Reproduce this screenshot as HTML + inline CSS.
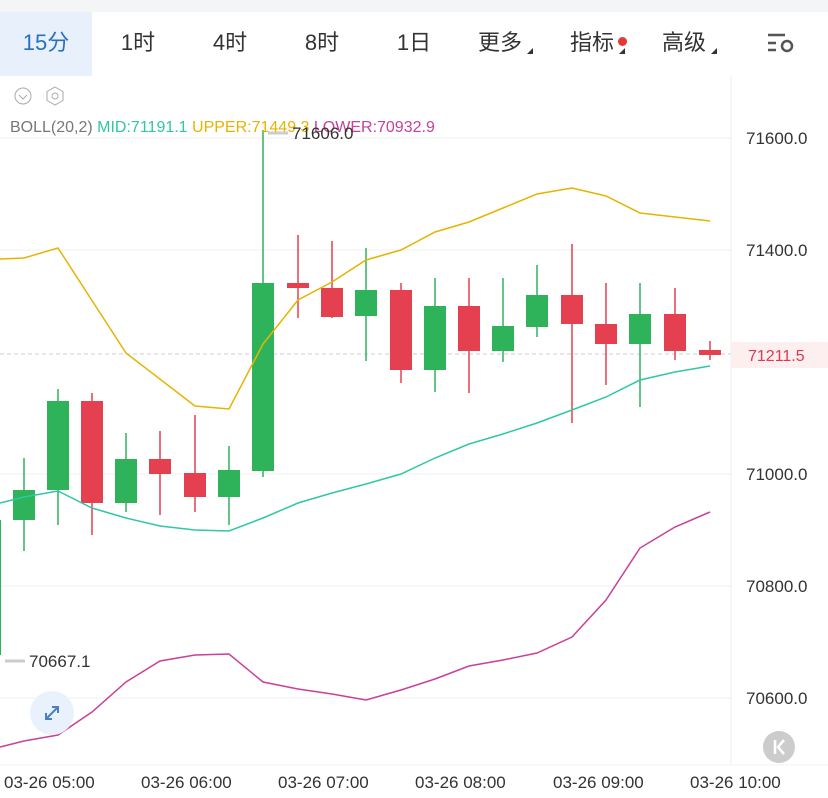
<!DOCTYPE html><html><head><meta charset="utf-8"><style>
body{margin:0;width:828px;height:798px;overflow:hidden;background:#fff;font-family:"Liberation Sans","Noto Sans CJK SC",sans-serif;}
.top{position:absolute;left:0;top:0;width:828px;height:12px;background:#f3f5f7}
.tabs{position:absolute;top:12px;left:0;width:828px;height:64px}
.tab{position:absolute;top:0;height:64px;line-height:62px;font-size:22px;color:#333;text-align:center}
.sel{background:#e7f0fb;color:#2a6fc0}
.tri{position:absolute;width:0;height:0;border-left:6px solid transparent;border-bottom:6px solid #333;}
</style></head><body>
<div class="top"></div>
<div class="tabs">
<div class="tab sel" style="left:0;width:92px">15分</div>
<div class="tab" style="left:92px;width:92px">1时</div>
<div class="tab" style="left:184px;width:92px">4时</div>
<div class="tab" style="left:276px;width:92px">8时</div>
<div class="tab" style="left:368px;width:92px">1日</div>
<div class="tab" style="left:460px;width:80px">更多</div><div class="tri" style="left:527px;top:36px"></div>
<div class="tab" style="left:552px;width:80px">指标</div><div class="tri" style="left:619px;top:36px"></div>
<div style="position:absolute;left:618px;top:25px;width:9px;height:9px;border-radius:50%;background:#e53935"></div>
<div class="tab" style="left:644px;width:80px">高级</div><div class="tri" style="left:711px;top:36px"></div>
</div>
<svg width="828" height="798" style="position:absolute;left:0;top:0" font-family="Liberation Sans, sans-serif">
<g stroke="#555" stroke-width="2.5" fill="none"><line x1="768" y1="35" x2="785" y2="35"/><line x1="768" y1="43" x2="776" y2="43"/><line x1="768" y1="50" x2="776" y2="50"/><circle cx="787" cy="46" r="5"/></g>
<g stroke="#aaa" fill="none" stroke-width="1"><circle cx="23" cy="96" r="8"/><path d="M19 95l4 4 4-4"/><path d="M55 87l8 4.5v9l-8 4.5-8-4.5v-9z"/><circle cx="55" cy="96" r="3"/></g>
<line x1="731" y1="76" x2="731" y2="765" stroke="#eee"/>
<g stroke="#f0f0f0"><line x1="0" y1="138" x2="731" y2="138"/><line x1="0" y1="250" x2="731" y2="250"/><line x1="0" y1="474" x2="731" y2="474"/><line x1="0" y1="586" x2="731" y2="586"/><line x1="0" y1="698" x2="731" y2="698"/></g>
<line x1="0" y1="354" x2="731" y2="354" stroke="#ccc" stroke-dasharray="4,3"/>
<rect x="731" y="342" width="97" height="26" fill="#fdeef0"/>
<text x="748" y="361" font-size="16" fill="#e0394f">71211.5</text>
<g font-size="17" fill="#333"><text x="746" y="144">71600.0</text><text x="746" y="256">71400.0</text><text x="746" y="480">71000.0</text><text x="746" y="592">70800.0</text><text x="746" y="704">70600.0</text></g>
<g font-size="17" fill="#333"><text x="4" y="788">03-26 05:00</text><text x="141" y="788">03-26 06:00</text><text x="278" y="788">03-26 07:00</text><text x="415" y="788">03-26 08:00</text><text x="553" y="788">03-26 09:00</text><text x="690" y="788">03-26 10:00</text></g>
<line x1="0" y1="765" x2="828" y2="765" stroke="#f3f3f3"/>
<g stroke-width="1.5">
<g stroke="#2fb35a" fill="#2fb35a">
<line x1="24" y1="458" x2="24" y2="551"/><rect x="13" y="490" width="22" height="30" stroke="none"/>
<line x1="58" y1="389" x2="58" y2="525"/><rect x="47" y="401" width="22" height="89" stroke="none"/>
<line x1="126" y1="433" x2="126" y2="512"/><rect x="115" y="459" width="22" height="44" stroke="none"/>
<line x1="229" y1="446" x2="229" y2="525"/><rect x="218" y="470" width="22" height="27" stroke="none"/>
<line x1="263" y1="130" x2="263" y2="477"/><rect x="252" y="283" width="22" height="188" stroke="none"/>
<line x1="366" y1="248" x2="366" y2="361"/><rect x="355" y="290" width="22" height="26" stroke="none"/>
<line x1="435" y1="278" x2="435" y2="392"/><rect x="424" y="306" width="22" height="64" stroke="none"/>
<line x1="503" y1="278" x2="503" y2="362"/><rect x="492" y="326" width="22" height="25" stroke="none"/>
<line x1="537" y1="265" x2="537" y2="337"/><rect x="526" y="295" width="22" height="32" stroke="none"/>
<line x1="640" y1="283" x2="640" y2="407"/><rect x="629" y="314" width="22" height="30" stroke="none"/>
<rect x="-11" y="520" width="12" height="135" stroke="none"/>
</g>
<g stroke="#e5404f" fill="#e5404f">
<line x1="92" y1="393" x2="92" y2="535"/><rect x="81" y="401" width="22" height="102" stroke="none"/>
<line x1="160" y1="431" x2="160" y2="515"/><rect x="149" y="459" width="22" height="15" stroke="none"/>
<line x1="195" y1="415" x2="195" y2="512"/><rect x="184" y="473" width="22" height="24" stroke="none"/>
<line x1="298" y1="235" x2="298" y2="318"/><rect x="287" y="283" width="22" height="5" stroke="none"/>
<line x1="332" y1="241" x2="332" y2="318"/><rect x="321" y="288" width="22" height="29" stroke="none"/>
<line x1="401" y1="283" x2="401" y2="383"/><rect x="390" y="290" width="22" height="80" stroke="none"/>
<line x1="469" y1="278" x2="469" y2="393"/><rect x="458" y="306" width="22" height="45" stroke="none"/>
<line x1="572" y1="244" x2="572" y2="423"/><rect x="561" y="295" width="22" height="29" stroke="none"/>
<line x1="606" y1="283" x2="606" y2="385"/><rect x="595" y="324" width="22" height="20" stroke="none"/>
<line x1="675" y1="288" x2="675" y2="360"/><rect x="664" y="314" width="22" height="37" stroke="none"/>
<line x1="710" y1="341" x2="710" y2="360"/><rect x="699" y="350" width="22" height="5" stroke="none"/>
</g>
</g>
<polyline fill="none" stroke="#e6b400" stroke-width="1.5" points="0,259 24,258 58,248 126,353 195,406 229,409 263,344 298,300 332,282 366,260 401,250 435,232 469,222 503,208 537,194 572,188 606,196 640,213 675,217 710,221"/>
<polyline fill="none" stroke="#2fc7a4" stroke-width="1.5" points="0,503 24,497 58,491 92,508 126,518 160,526 195,530 229,531 263,518 298,503 332,493 366,484 401,474 435,458 469,444 503,434 537,423 572,410 606,397 640,380 675,372 710,366"/>
<polyline fill="none" stroke="#c8409a" stroke-width="1.5" points="0,747 24,741 58,735 92,712 126,682 160,661 195,655 229,654 263,682 298,689 332,694 366,700 401,690 435,679 469,666 503,660 537,653 572,637 606,600 640,548 675,527 710,512"/>
<text x="10" y="132" font-size="16"><tspan fill="#777">BOLL(20,2) </tspan><tspan fill="#2fc7a4">MID:71191.1 </tspan><tspan fill="#e6b400">UPPER:71449.3 </tspan><tspan fill="#c8409a">LOWER:70932.9</tspan></text>
<line x1="268" y1="133" x2="288" y2="133" stroke="#ccc" stroke-width="3"/><text x="292" y="139" font-size="17" fill="#333">71606.0</text>
<line x1="5" y1="661" x2="25" y2="661" stroke="#ccc" stroke-width="3"/><text x="29" y="667" font-size="17" fill="#333">70667.1</text>
<circle cx="52" cy="713" r="22" fill="#e9f2fc"/>
<g stroke="#4a7fc0" stroke-width="2" fill="none"><path d="M46 719l12-12M52 707h6v6M46 713v6h6"/></g>
<circle cx="779" cy="747" r="16" fill="#ccc"/><path d="M775 740v14M784 740l-6 7 6 7" stroke="#fff" stroke-width="2.5" fill="none"/>
</svg>
</body></html>
